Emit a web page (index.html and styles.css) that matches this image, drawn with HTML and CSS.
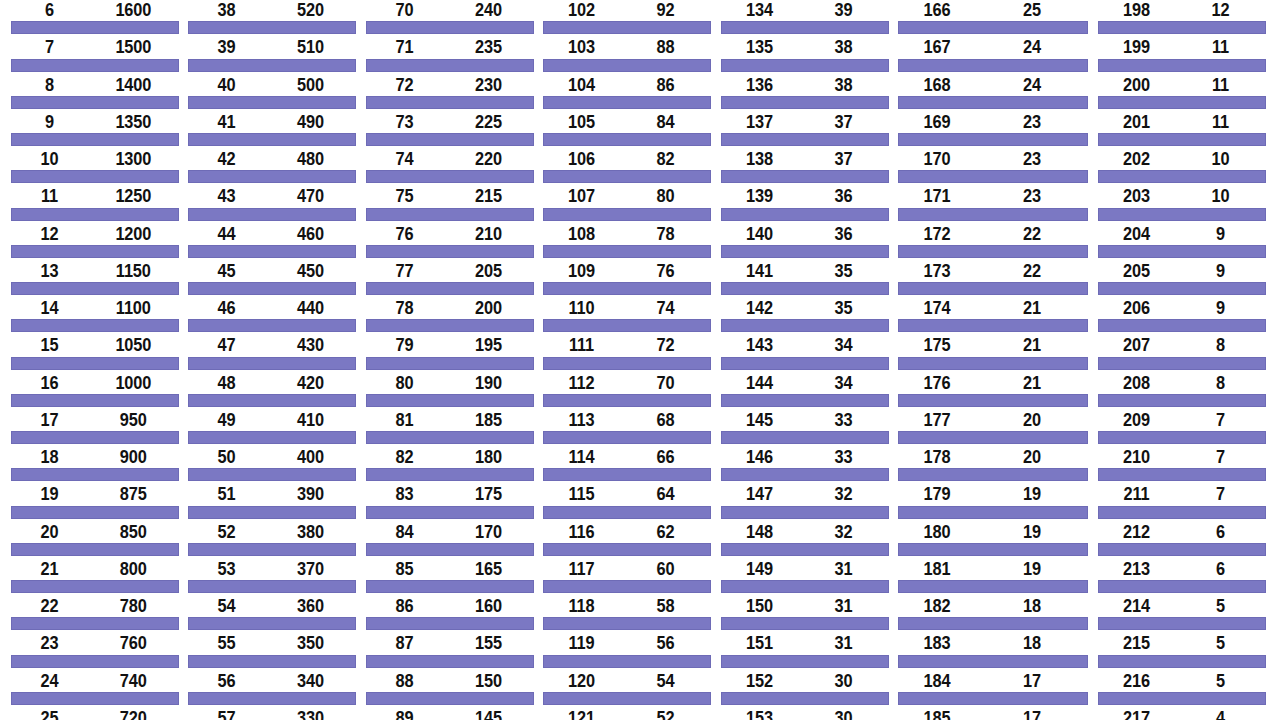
FILE: index.html
```html
<!DOCTYPE html>
<html>
<head>
<meta charset="utf-8">
<link rel="stylesheet" href="styles.css">
</head>
<body>
<div class="table">
  <div class="grp">
    <div class="r"><span>6</span><span>1600</span></div>
    <div class="r"><span>7</span><span>1500</span></div>
    <div class="r"><span>8</span><span>1400</span></div>
    <div class="r"><span>9</span><span>1350</span></div>
    <div class="r"><span>10</span><span>1300</span></div>
    <div class="r"><span>11</span><span>1250</span></div>
    <div class="r"><span>12</span><span>1200</span></div>
    <div class="r"><span>13</span><span>1150</span></div>
    <div class="r"><span>14</span><span>1100</span></div>
    <div class="r"><span>15</span><span>1050</span></div>
    <div class="r"><span>16</span><span>1000</span></div>
    <div class="r"><span>17</span><span>950</span></div>
    <div class="r"><span>18</span><span>900</span></div>
    <div class="r"><span>19</span><span>875</span></div>
    <div class="r"><span>20</span><span>850</span></div>
    <div class="r"><span>21</span><span>800</span></div>
    <div class="r"><span>22</span><span>780</span></div>
    <div class="r"><span>23</span><span>760</span></div>
    <div class="r"><span>24</span><span>740</span></div>
    <div class="r"><span>25</span><span>720</span></div>
  </div>
  <div class="grp">
    <div class="r"><span>38</span><span>520</span></div>
    <div class="r"><span>39</span><span>510</span></div>
    <div class="r"><span>40</span><span>500</span></div>
    <div class="r"><span>41</span><span>490</span></div>
    <div class="r"><span>42</span><span>480</span></div>
    <div class="r"><span>43</span><span>470</span></div>
    <div class="r"><span>44</span><span>460</span></div>
    <div class="r"><span>45</span><span>450</span></div>
    <div class="r"><span>46</span><span>440</span></div>
    <div class="r"><span>47</span><span>430</span></div>
    <div class="r"><span>48</span><span>420</span></div>
    <div class="r"><span>49</span><span>410</span></div>
    <div class="r"><span>50</span><span>400</span></div>
    <div class="r"><span>51</span><span>390</span></div>
    <div class="r"><span>52</span><span>380</span></div>
    <div class="r"><span>53</span><span>370</span></div>
    <div class="r"><span>54</span><span>360</span></div>
    <div class="r"><span>55</span><span>350</span></div>
    <div class="r"><span>56</span><span>340</span></div>
    <div class="r"><span>57</span><span>330</span></div>
  </div>
  <div class="grp">
    <div class="r"><span>70</span><span>240</span></div>
    <div class="r"><span>71</span><span>235</span></div>
    <div class="r"><span>72</span><span>230</span></div>
    <div class="r"><span>73</span><span>225</span></div>
    <div class="r"><span>74</span><span>220</span></div>
    <div class="r"><span>75</span><span>215</span></div>
    <div class="r"><span>76</span><span>210</span></div>
    <div class="r"><span>77</span><span>205</span></div>
    <div class="r"><span>78</span><span>200</span></div>
    <div class="r"><span>79</span><span>195</span></div>
    <div class="r"><span>80</span><span>190</span></div>
    <div class="r"><span>81</span><span>185</span></div>
    <div class="r"><span>82</span><span>180</span></div>
    <div class="r"><span>83</span><span>175</span></div>
    <div class="r"><span>84</span><span>170</span></div>
    <div class="r"><span>85</span><span>165</span></div>
    <div class="r"><span>86</span><span>160</span></div>
    <div class="r"><span>87</span><span>155</span></div>
    <div class="r"><span>88</span><span>150</span></div>
    <div class="r"><span>89</span><span>145</span></div>
  </div>
  <div class="grp">
    <div class="r"><span>102</span><span>92</span></div>
    <div class="r"><span>103</span><span>88</span></div>
    <div class="r"><span>104</span><span>86</span></div>
    <div class="r"><span>105</span><span>84</span></div>
    <div class="r"><span>106</span><span>82</span></div>
    <div class="r"><span>107</span><span>80</span></div>
    <div class="r"><span>108</span><span>78</span></div>
    <div class="r"><span>109</span><span>76</span></div>
    <div class="r"><span>110</span><span>74</span></div>
    <div class="r"><span>111</span><span>72</span></div>
    <div class="r"><span>112</span><span>70</span></div>
    <div class="r"><span>113</span><span>68</span></div>
    <div class="r"><span>114</span><span>66</span></div>
    <div class="r"><span>115</span><span>64</span></div>
    <div class="r"><span>116</span><span>62</span></div>
    <div class="r"><span>117</span><span>60</span></div>
    <div class="r"><span>118</span><span>58</span></div>
    <div class="r"><span>119</span><span>56</span></div>
    <div class="r"><span>120</span><span>54</span></div>
    <div class="r"><span>121</span><span>52</span></div>
  </div>
  <div class="grp">
    <div class="r"><span>134</span><span>39</span></div>
    <div class="r"><span>135</span><span>38</span></div>
    <div class="r"><span>136</span><span>38</span></div>
    <div class="r"><span>137</span><span>37</span></div>
    <div class="r"><span>138</span><span>37</span></div>
    <div class="r"><span>139</span><span>36</span></div>
    <div class="r"><span>140</span><span>36</span></div>
    <div class="r"><span>141</span><span>35</span></div>
    <div class="r"><span>142</span><span>35</span></div>
    <div class="r"><span>143</span><span>34</span></div>
    <div class="r"><span>144</span><span>34</span></div>
    <div class="r"><span>145</span><span>33</span></div>
    <div class="r"><span>146</span><span>33</span></div>
    <div class="r"><span>147</span><span>32</span></div>
    <div class="r"><span>148</span><span>32</span></div>
    <div class="r"><span>149</span><span>31</span></div>
    <div class="r"><span>150</span><span>31</span></div>
    <div class="r"><span>151</span><span>31</span></div>
    <div class="r"><span>152</span><span>30</span></div>
    <div class="r"><span>153</span><span>30</span></div>
  </div>
  <div class="grp wide">
    <div class="r"><span>166</span><span>25</span></div>
    <div class="r"><span>167</span><span>24</span></div>
    <div class="r"><span>168</span><span>24</span></div>
    <div class="r"><span>169</span><span>23</span></div>
    <div class="r"><span>170</span><span>23</span></div>
    <div class="r"><span>171</span><span>23</span></div>
    <div class="r"><span>172</span><span>22</span></div>
    <div class="r"><span>173</span><span>22</span></div>
    <div class="r"><span>174</span><span>21</span></div>
    <div class="r"><span>175</span><span>21</span></div>
    <div class="r"><span>176</span><span>21</span></div>
    <div class="r"><span>177</span><span>20</span></div>
    <div class="r"><span>178</span><span>20</span></div>
    <div class="r"><span>179</span><span>19</span></div>
    <div class="r"><span>180</span><span>19</span></div>
    <div class="r"><span>181</span><span>19</span></div>
    <div class="r"><span>182</span><span>18</span></div>
    <div class="r"><span>183</span><span>18</span></div>
    <div class="r"><span>184</span><span>17</span></div>
    <div class="r"><span>185</span><span>17</span></div>
  </div>
  <div class="grp">
    <div class="r"><span>198</span><span>12</span></div>
    <div class="r"><span>199</span><span>11</span></div>
    <div class="r"><span>200</span><span>11</span></div>
    <div class="r"><span>201</span><span>11</span></div>
    <div class="r"><span>202</span><span>10</span></div>
    <div class="r"><span>203</span><span>10</span></div>
    <div class="r"><span>204</span><span>9</span></div>
    <div class="r"><span>205</span><span>9</span></div>
    <div class="r"><span>206</span><span>9</span></div>
    <div class="r"><span>207</span><span>8</span></div>
    <div class="r"><span>208</span><span>8</span></div>
    <div class="r"><span>209</span><span>7</span></div>
    <div class="r"><span>210</span><span>7</span></div>
    <div class="r"><span>211</span><span>7</span></div>
    <div class="r"><span>212</span><span>6</span></div>
    <div class="r"><span>213</span><span>6</span></div>
    <div class="r"><span>214</span><span>5</span></div>
    <div class="r"><span>215</span><span>5</span></div>
    <div class="r"><span>216</span><span>5</span></div>
    <div class="r"><span>217</span><span>4</span></div>
  </div>
</div>
</body>
</html>
```
FILE: styles.css
```css
html, body {
  margin: 0;
  padding: 0;
  background: #ffffff;
  overflow: hidden;
}
body {
  width: 1279px;
  height: 720px;
  font-family: "Liberation Sans", Arial, sans-serif;
  font-weight: bold;
  font-size: 19px;
  color: #111111;
}
.table {
  display: flex;
  align-items: flex-start;
  margin-top: -3px;
  padding-left: 11px;
  gap: 9.5px;
}
.grp {
  width: 168px;
  display: flex;
  flex-direction: column;
}
.grp:first-child {
  width: 167.5px;
}
.grp.wide {
  width: 190px;
}
.r {
  display: grid;
  grid-template-columns: 77px 1fr;
  grid-template-rows: 24.25px 13px;
}
.grp.wide .r {
  grid-template-columns: 78px 1fr;
}
.r span {
  display: flex;
  align-items: center;
  justify-content: center;
  line-height: 1;
  padding-top: 1px;
  transform: scaleX(0.86);
  letter-spacing: -0.2px;
}
.r::after {
  content: "";
  grid-column: 1 / -1;
  background: #7b78c3;
  border: 1px solid #6e6bb6;
  box-sizing: border-box;
}
```
